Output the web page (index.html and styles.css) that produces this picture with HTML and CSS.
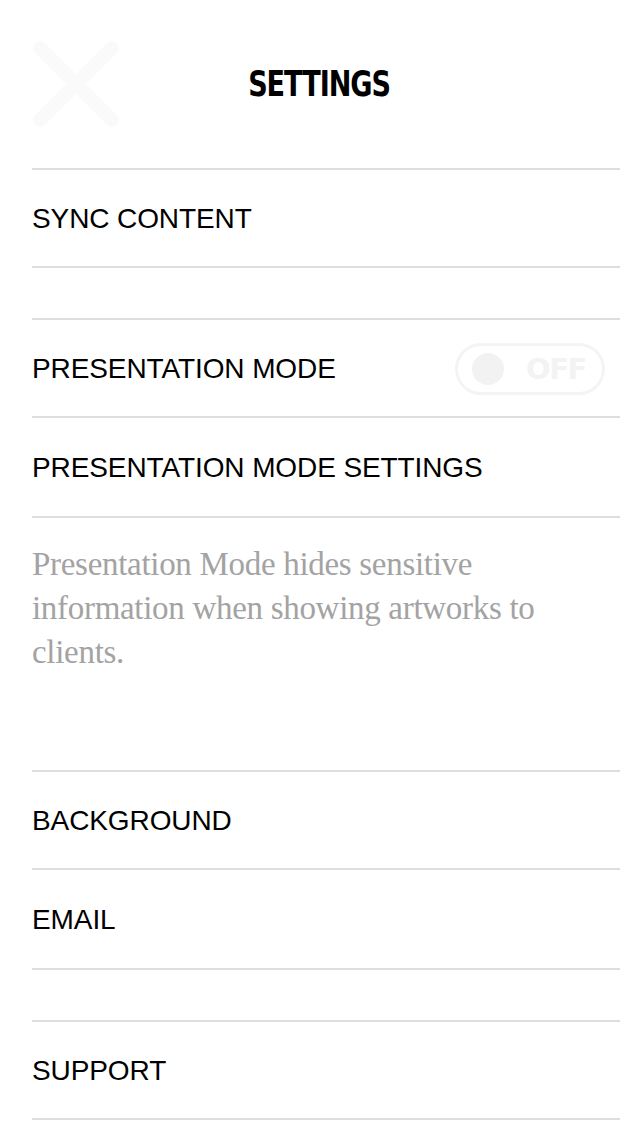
FILE: index.html
```html
<!DOCTYPE html>
<html>
<head>
<meta charset="utf-8">
<link rel="stylesheet" href="styles.css">
</head>
<body>
<div class="screen">
  <header class="header">
    <svg class="close" width="88" height="88" viewBox="0 0 88 88">
      <path d="M8 8 L80 80 M80 8 L8 80" stroke="#fafafa" stroke-width="14" stroke-linecap="round"/>
    </svg>
    <h1 class="title">SETTINGS</h1>
  </header>

  <section class="group first">
    <div class="row">SYNC CONTENT</div>
  </section>

  <section class="group">
    <div class="row">
      <span>PRESENTATION MODE</span>
      <div class="toggle"><span class="knob"></span><span class="toggle-label">OFF</span></div>
    </div>
    <div class="row tall">PRESENTATION MODE SETTINGS</div>
    <p class="note">Presentation Mode hides sensitive information when showing artworks to clients.</p>
    <div class="row">BACKGROUND</div>
    <div class="row tall">EMAIL</div>
  </section>

  <section class="group">
    <div class="row">SUPPORT</div>
  </section>
</div>
</body>
</html>
```

FILE: styles.css
```css
html, body {
  margin: 0;
  padding: 0;
  background: #ffffff;
}

.screen {
  width: 640px;
  height: 1136px;
  overflow: hidden;
  padding: 0 20px 0 32px;
  box-sizing: border-box;
  font-family: "Liberation Sans", Arial, sans-serif;
  color: #000;
}

.header {
  position: relative;
  height: 168px;
  display: flex;
  align-items: center;
  justify-content: center;
}

.close {
  position: absolute;
  left: 0;
  top: 40px;
}

.title {
  margin: 0 0 0 -32px;
  padding-left: 20px;
  font-family: "DejaVu Sans", sans-serif;
  font-stretch: condensed;
  font-weight: bold;
  font-size: 35px;
  letter-spacing: -1.2px;
  transform: scaleX(0.86);
}

.group {
  border-top: 2px solid #dedede;
  margin-bottom: 50px;
}

.row {
  height: 96px;
  padding-top: 2px;
  box-sizing: content-box;
  height: 94px;
  border-bottom: 2px solid #dedede;
  display: flex;
  align-items: center;
  justify-content: space-between;
  font-size: 28px;
  letter-spacing: -0.1px;
}

.row.tall {
  height: 96px;
}

.note {
  margin: 0;
  height: 254px;
  box-sizing: border-box;
  border-bottom: 2px solid #dedede;
  padding: 24px 40px 0 0;
  font-family: "Liberation Serif", "Times New Roman", serif;
  font-size: 33px;
  line-height: 44px;
  color: #a3a3a3;
  letter-spacing: -0.3px;
}

.toggle {
  width: 144px;
  height: 46px;
  border: 3px solid #f4f4f4;
  border-radius: 26px;
  display: flex;
  align-items: center;
  margin-right: 15px;
  box-sizing: content-box;
}

.knob {
  width: 32px;
  height: 32px;
  border-radius: 50%;
  background: #f2f2f2;
  margin-left: 14px;
}

.toggle-label {
  margin-left: 22px;
  font-family: "DejaVu Sans", sans-serif;
  font-weight: bold;
  font-size: 29px;
  color: #f3f3f3;
  letter-spacing: -1.5px;
}
```
